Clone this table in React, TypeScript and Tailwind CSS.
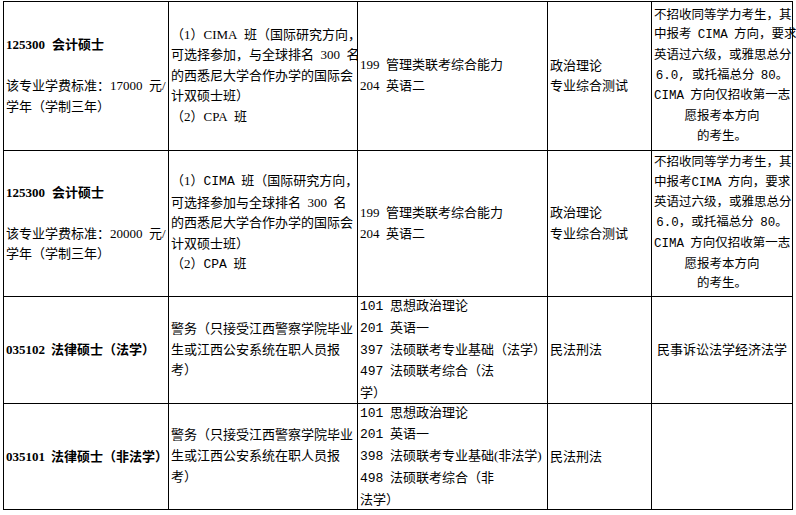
import React from "react";

const mono = "font-['Liberation_Mono','Noto_Sans_CJK_SC',monospace]";

const Cell = ({ children, className = "" }: { children: React.ReactNode; className?: string }) => (
  <div className={`flex flex-col justify-center overflow-visible whitespace-nowrap bg-white px-[2px] ${className}`}>
    {children}
  </div>
);

const Lines = ({ lines }: { lines: React.ReactNode[] }) => (
  <>
    {lines.map((line, i) => (
      <div key={i}>{line}</div>
    ))}
  </>
);

const M = ({ children }: { children: React.ReactNode }) => <span className={mono}>{children}</span>;

const Program = ({ fee }: { fee: string }) => (
  <Cell className="leading-[20.5px]">
    <div className="font-bold">
      125300<span className="ml-[7px]">会计硕士</span>
    </div>
    <div>&nbsp;</div>
    <div>该专业学费标准：{fee}&ensp;元/</div>
    <div>学年（学制三年）</div>
  </Cell>
);

const Exams = () => (
  <Cell className="leading-[20.7px]">
    <Lines lines={["199\u2002管理类联考综合能力", "204\u2002英语二"]} />
  </Cell>
);

const Retest = () => (
  <Cell className="leading-[20.5px]">
    <Lines lines={["政治理论", "专业综合测试"]} />
  </Cell>
);

export default function App() {
  return (
    <div className="min-h-[515px] bg-white pt-[1px] pl-[3px] text-[13px] text-black font-['Liberation_Serif','Noto_Sans_CJK_SC',serif]">
      <div className="grid w-[790px] grid-cols-[164px_188px_189px_103px_140px] grid-rows-[148px_145px_106px_105px] gap-px bg-black p-px">
        {/* row 1 */}
        <Program fee="17000" />
        <Cell className="leading-[20.6px]">
          <Lines
            lines={[
              "（1）CIMA\u2002班（国际研究方向，",
              "可选择参加，与全球排名\u2002300\u2002名",
              "的西悉尼大学合作办学的国际会",
              "计双硕士班）",
              "（2）CPA\u2002班",
            ]}
          />
        </Cell>
        <Exams />
        <Retest />
        <Cell className="text-center text-[12.5px] leading-[19.7px]">
          <Lines
            lines={[
              "不招收同等学力考生，其",
              <>
                中报考&ensp;<M>CIMA</M>&ensp;方向，要求
              </>,
              "英语过六级，或雅思总分",
              <>
                <M>6.0,</M>&ensp;或托福总分&ensp;<M>80</M>。
              </>,
              <>
                <M>CIMA</M>&ensp;方向仅招收第一志
              </>,
              "愿报考本方向",
              "的考生。",
            ]}
          />
        </Cell>

        {/* row 2 */}
        <Program fee="20000" />
        <Cell className="leading-[20.6px]">
          <Lines
            lines={[
              <>
                （1）<M>CIMA</M>&ensp;班（国际研究方向，
              </>,
              "可选择参加与全球排名\u2002300\u2002名",
              "的西悉尼大学合作办学的国际会",
              "计双硕士班）",
              <>
                （2）<M>CPA</M>&ensp;班
              </>,
            ]}
          />
        </Cell>
        <Exams />
        <Retest />
        <Cell className="text-center text-[12.5px] leading-[19.7px]">
          <Lines
            lines={[
              "不招收同等学力考生，其",
              <>
                中报考<M>CIMA</M>&ensp;方向，要求
              </>,
              "英语过六级，或雅思总分",
              <>
                <M>6.0</M>，或托福总分&ensp;<M>80</M>。
              </>,
              <>
                <M>CIMA</M>&ensp;方向仅招收第一志
              </>,
              "愿报考本方向",
              "的考生。",
            ]}
          />
        </Cell>

        {/* row 3 */}
        <Cell className="font-bold">
          <div>
            035102<span className="ml-[6px]">法律硕士（法学）</span>
          </div>
        </Cell>
        <Cell className="leading-[20.7px]">
          <Lines lines={["警务（只接受江西警察学院毕业", "生或江西公安系统在职人员报", "考）"]} />
        </Cell>
        <Cell className="leading-[20.75px]">
          <Lines
            lines={[
              <>
                <M>101</M>&ensp;思想政治理论
              </>,
              <>
                <M>201</M>&ensp;英语一
              </>,
              <>
                <M>397</M>&ensp;法硕联考专业基础（法学）
              </>,
              <>
                <M>497</M>&ensp;法硕联考综合（法
              </>,
              "学）",
            ]}
          />
        </Cell>
        <Cell>
          <div>民法刑法</div>
        </Cell>
        <Cell className="text-center">
          <div>民事诉讼法学经济法学</div>
        </Cell>

        {/* row 4 */}
        <Cell className="font-bold">
          <div>
            035101<span className="ml-[6px]">法律硕士（非法学）</span>
          </div>
        </Cell>
        <Cell className="leading-[20.7px]">
          <Lines lines={["警务（只接受江西警察学院毕业", "生或江西公安系统在职人员报", "考）"]} />
        </Cell>
        <Cell className="leading-[20.8px]">
          <Lines
            lines={[
              <>
                <M>101</M>&ensp;思想政治理论
              </>,
              <>
                <M>201</M>&ensp;英语一
              </>,
              <>
                <M>398</M>&ensp;法硕联考专业基础(非法学)
              </>,
              <>
                <M>498</M>&ensp;法硕联考综合（非
              </>,
              "法学）",
            ]}
          />
        </Cell>
        <Cell>
          <div>民法刑法</div>
        </Cell>
        <Cell>
          <div />
        </Cell>
      </div>
    </div>
  );
}
